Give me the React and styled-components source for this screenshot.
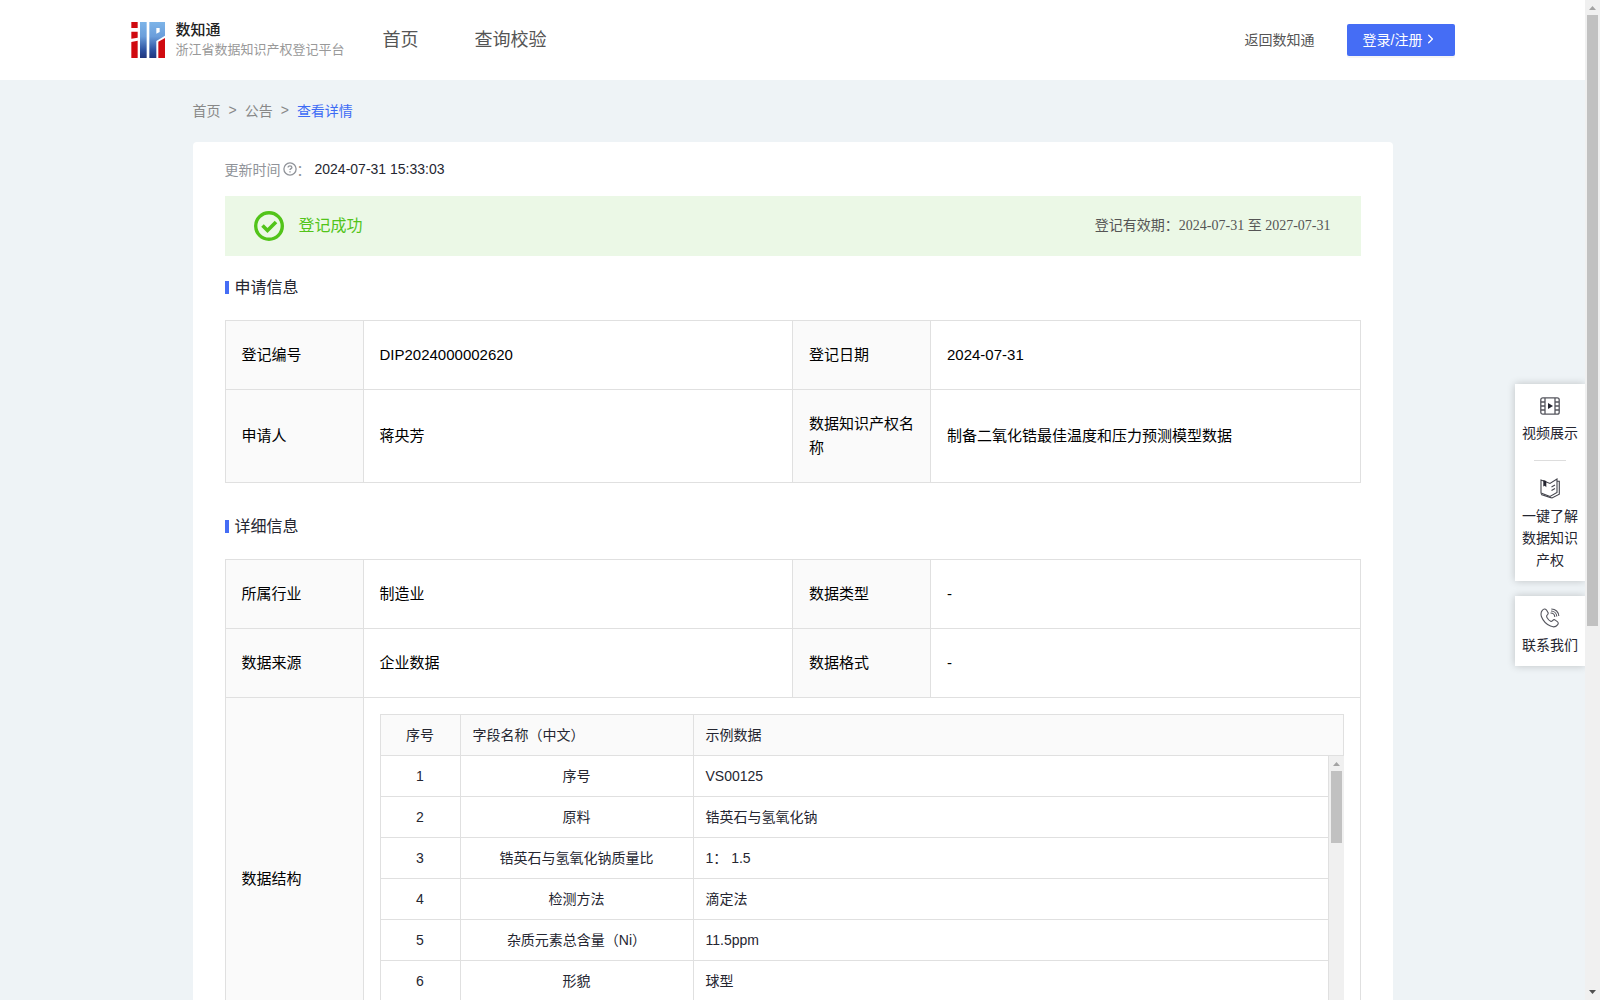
import styled, { createGlobalStyle } from 'styled-components';
import { FiChevronRight } from 'react-icons/fi';

const GlobalStyle = createGlobalStyle`
  * {
    box-sizing: border-box;
  }

  body {
    margin: 0;
    font-family: "Liberation Sans", "Noto Sans CJK SC", sans-serif;
    font-size: 14px;
    color: #252631;
    background-color: #eef3f6;
  }

  a {
    color: inherit;
    text-decoration: none;
  }
`;

const Shell = styled.div`
  position: relative;
  display: flex;
  height: 100vh;
  overflow: hidden;
`;

const Page = styled.div`
  flex: 1;
  min-width: 0;
  overflow: hidden;
`;

const HeaderWrapper = styled.header`
  height: 80px;
  background-color: #fff;
`;

const HeaderInner = styled.div`
  display: flex;
  align-items: center;
  max-width: 1324px;
  height: 100%;
  margin: 0 auto;
`;

const Brand = styled.a`
  display: flex;
  align-items: center;
  gap: 11px;
`;

const BrandText = styled.div`
  display: flex;
  flex-direction: column;
`;

const BrandName = styled.span`
  font-size: 15px;
  font-weight: 500;
  line-height: 20px;
  color: #222;
`;

const BrandSub = styled.span`
  font-size: 13px;
  line-height: 20px;
  color: #999;
`;

const Nav = styled.nav`
  display: flex;
  gap: 56px;
  margin-left: 38px;
  padding-bottom: 4px;
  font-size: 18px;
  color: #555;
`;

const HeaderActions = styled.div`
  display: flex;
  align-items: center;
  gap: 32px;
  margin-left: auto;
  color: #555;
`;

const BackLink = styled.a`
  padding-bottom: 2px;
`;

const LoginButton = styled.button`
  display: flex;
  align-items: center;
  gap: 1px;
  width: 108px;
  height: 32px;
  padding: 0 16px 2px;
  border: none;
  border-radius: 2px;
  background-color: #456df5;
  box-shadow: 0 2px 0 rgba(0, 0, 0, 0.04);
  color: #fff;
  font-family: inherit;
  font-size: 14px;
  white-space: nowrap;
  cursor: pointer;
`;

const Main = styled.main`
  max-width: 1200px;
  margin: 0 auto;
`;

const Breadcrumb = styled.nav`
  display: flex;
  align-items: center;
  gap: 8px;
  height: 62px;
  padding-bottom: 2px;
  color: #888;
`;

const Current = styled.a`
  color: #3d6bf5;
`;

const Card = styled.div`
  padding: 16px 32px;
  border-radius: 4px;
  background-color: #fff;
`;

const UpdateRow = styled.div`
  display: flex;
  align-items: center;
  height: 22px;
  margin-bottom: 16px;
  color: #909399;

  svg {
    margin-left: 2px;
  }
`;

const UpdateTime = styled.span`
  margin-left: 4px;
  color: #252631;
`;

const Banner = styled.div`
  display: flex;
  align-items: center;
  gap: 15px;
  height: 60px;
  padding: 0 30px 0 29px;
  background-color: #ebf8e6;
`;

const BannerStatus = styled.span`
  padding-bottom: 4px;
  font-size: 16px;
  color: #52c41a;
`;

const Validity = styled.span`
  margin-left: auto;
  padding-bottom: 4px;
  font-family: "Liberation Serif", "Noto Sans CJK SC", serif;
  color: #555;
`;

const SectionTitle = styled.h2`
  display: flex;
  align-items: center;
  gap: 6px;
  height: 24px;
  margin: ${({ $top }) => $top}px 0 21px;
  padding-bottom: 2px;
  font-size: 16px;
  font-weight: 400;

  &::before {
    content: '';
    width: 4px;
    height: 13px;
    margin-top: 3px;
    background-color: #456df5;
  }
`;

const InfoTable = styled.table`
  width: 100%;
  table-layout: fixed;
  border-collapse: collapse;
  font-size: 15px;
  line-height: 24px;
  color: #000;
`;

const LabelCell = styled.th`
  width: 138px;
  height: ${({ $tall }) => ($tall ? 93 : 69)}px;
  padding: 0 16px;
  border: 1px solid #e0e0e0;
  background-color: #fafafa;
  font-weight: 400;
  text-align: left;
`;

const ValueCell = styled.td`
  padding: ${({ $nested }) => ($nested ? '16px' : '0 16px')};
  border: 1px solid #e0e0e0;
`;

const FieldHead = styled.div`
  border: 1px solid #e0e0e0;
  background-color: #fafafa;
`;

const FieldBody = styled.div`
  display: flex;
  height: 287px;
  border-left: 1px solid #e0e0e0;
`;

const FieldTable = styled.table`
  flex: 1;
  width: 100%;
  table-layout: fixed;
  border-collapse: separate;
  border-spacing: 0;
  font-size: 14px;
  line-height: 20px;
  color: #252631;
  align-self: flex-start;

  th,
  td {
    height: 41px;
    padding: 0 12px 1px;
    border-right: 1px solid #e0e0e0;
    border-bottom: 1px solid #e0e0e0;
    font-weight: 400;
    text-align: left;
  }

  thead th {
    height: 40px;
    border-bottom: none;
  }

  thead th:last-child {
    border-right: none;
  }

  th:first-child,
  td:first-child {
    width: 80px;
    text-align: center;
  }

  th:nth-child(2),
  td:nth-child(2) {
    width: 233px;
  }

  td:nth-child(2) {
    text-align: center;
  }
`;

const Rail = styled.div`
  display: flex;
  flex-direction: column;
  flex: none;
  align-items: center;
  width: 15px;
  background-color: #f0f0f0;
`;

const RailArrow = styled.svg`
  flex: none;
  width: 15px;
  height: 15px;
`;

const RailTrack = styled.div`
  flex: 1;
  width: 11px;
`;

const RailThumb = styled.div`
  height: ${({ $size }) => $size}%;
  background-color: #c1c1c1;
`;

const Floating = styled.aside`
  position: absolute;
  top: 384px;
  right: 15px;
  display: flex;
  flex-direction: column;
  gap: 15px;
  width: 70px;
`;

const FloatBox = styled.div`
  display: flex;
  flex-direction: column;
  align-items: center;
  padding: 12px 7px 10px;
  background-color: #fff;
  box-shadow: 0 0 8px rgba(0, 0, 0, 0.2);
  clip-path: inset(-12px 0 -12px -12px);
`;

const FloatLink = styled.a`
  display: flex;
  flex-direction: column;
  align-items: center;
  gap: 6px;
  line-height: 22px;
  text-align: center;
`;

const FloatDivider = styled.hr`
  width: 32px;
  margin: 16px 0 17px;
  border: none;
  border-top: 1px solid #ddd;
`;

const fields = [
    ['序号', 'VS00125'],
    ['原料', '锆英石与氢氧化钠'],
    ['锆英石与氢氧化钠质量比', '1： 1.5'],
    ['检测方法', '滴定法'],
    ['杂质元素总含量（Ni）', '11.5ppm'],
    ['形貌', '球型'],
];

const Logo = () => (
    <svg width="34" height="36" viewBox="0 0 102 108" aria-hidden="true">
        <defs>
            <linearGradient id="logoBlue" gradientUnits="userSpaceOnUse" x1="0" y1="0" x2="0" y2="108">
                <stop offset="0" stopColor="#7db4e8" />
                <stop offset="0.4" stopColor="#6b9edb" />
                <stop offset="0.8" stopColor="#2b4f9e" />
                <stop offset="1" stopColor="#20357c" />
            </linearGradient>
        </defs>
        <path fill="#d00a10" d="M1 0h19v18H1zM1 29h19v18L1 50zM1 60l19-4v52H1z" />
        <path fill="url(#logoBlue)" d="M27 0h20v108H27z" />
        <path fill="url(#logoBlue)" fillRule="evenodd" d="M55 0h47v41L76 57v51H55zM76 18v17l10-5V18z" />
        <path fill="#d00a10" d="M82 59l20-11v60H82z" />
    </svg>
);

const QuestionIcon = () => (
    <svg width="14" height="14" viewBox="0 0 14 14" fill="none" stroke="#909399" strokeWidth="1.3">
        <circle cx="7" cy="7" r="6.1" />
        <path d="M5.1 5.5c0-1 .8-1.7 1.9-1.7s1.9.7 1.9 1.6c0 1.2-1.9 1.3-1.9 2.6" />
        <path d="M7 9.2v1.3" />
    </svg>
);

const SuccessIcon = () => (
    <svg width="30" height="30" viewBox="0 0 30 30" fill="none" stroke="#52c41a">
        <circle cx="15" cy="15" r="13.3" strokeWidth="3.4" />
        <path d="M8.5 14.5l5 5 8.5-8.5" strokeWidth="3.6" />
    </svg>
);

const VideoIcon = () => (
    <svg width="20" height="20" viewBox="0 0 20 20" fill="none" stroke="#55565e" strokeWidth="1.3">
        <rect x="0.8" y="1.8" width="18.4" height="16.4" rx="2" />
        <path d="M5 2v16M15 2v16M1 6h4M1 10h4M1 14h4M15 6h4M15 10h4M15 14h4" />
        <path d="M8 7l5 3-5 3z" fill="#252631" stroke="none" />
    </svg>
);

const BookIcon = () => (
    <svg width="20" height="21" viewBox="0 0 20 21" fill="none" stroke="#44454d" strokeWidth="1.1">
        <path d="M1 2l9 3.5L17 1v13.5l-7 4L1 15z" />
        <path d="M17 3.2h2.3v13L12 20l-2-.6L1 16.5" />
        <path d="M11.5 9l3.5-2M11.5 12.5l3.5-2" />
        <path d="M3.300 2l3 1v6.200L4.800 7.800l-1.500.7z" fill="#252631" stroke="none" />
    </svg>
);

const PhoneIcon = () => (
    <svg width="20" height="20" viewBox="0 0 20 20" fill="none" stroke="#55565e" strokeWidth="1.1">
        <path d="M2.3 2.4C3.8.7 5.3.7 6.3 1.8l1.500 2.300c.7 1 .4 2-.5 2.800-1 .8-.9 1.700 0 3.100.9 1.500 2 2.700 3.300 3.300 1 .4 1.500-.2 2.200-1 .8-.8 1.700-.8 2.500-.2l2 1.500c1.300 1 1.200 2.100.2 3.300-1.500 1.900-4 2.500-7 1.200C6.500 16.400 3.100 12.900 1.500 8.800.7 6.300.8 4.100 2.300 2.400z" />
        <path d="M10.500 5c2.500 0 4.200 1.800 4.300 4M11 3c3.200 0 5.600 2.300 5.800 5.500M11.300 1c4.300 0 7.300 3 7.500 7" />
    </svg>
);

const Scrollbar = ({ size }) => (
    <Rail aria-hidden="true">
        <RailArrow viewBox="0 0 15 15">
            <path d="M4 10l3.500-4 3.500 4z" fill="#a3a3a3" />
        </RailArrow>
        <RailTrack>
            <RailThumb $size={size} />
        </RailTrack>
        <RailArrow viewBox="0 0 15 15">
            <path d="M4 5l3.500 4L11 5z" fill="#505050" />
        </RailArrow>
    </Rail>
);

const Header = () => (
    <HeaderWrapper>
        <HeaderInner>
            <Brand href="#">
                <Logo />
                <BrandText>
                    <BrandName>数知通</BrandName>
                    <BrandSub>浙江省数据知识产权登记平台</BrandSub>
                </BrandText>
            </Brand>
            <Nav>
                <a href="#">首页</a>
                <a href="#">查询校验</a>
            </Nav>
            <HeaderActions>
                <BackLink href="#">返回数知通</BackLink>
                <LoginButton type="button">
                    登录/注册
                    <FiChevronRight size={16} />
                </LoginButton>
            </HeaderActions>
        </HeaderInner>
    </HeaderWrapper>
);

const FieldStructure = () => (
    <>
        <FieldHead>
            <FieldTable>
                <thead>
                    <tr>
                        <th>序号</th>
                        <th>字段名称（中文）</th>
                        <th>示例数据</th>
                    </tr>
                </thead>
            </FieldTable>
        </FieldHead>
        <FieldBody>
            <FieldTable>
                <tbody>
                    {fields.map(([name, sample], index) => (
                        <tr key={name}>
                            <td>{index + 1}</td>
                            <td>{name}</td>
                            <td>{sample}</td>
                        </tr>
                    ))}
                </tbody>
            </FieldTable>
            <Scrollbar size={28} />
        </FieldBody>
    </>
);

const SideTools = () => (
    <Floating>
        <FloatBox>
            <FloatLink href="#">
                <VideoIcon />
                视频展示
            </FloatLink>
            <FloatDivider />
            <FloatLink href="#">
                <BookIcon />
                一键了解数据知识产权
            </FloatLink>
        </FloatBox>
        <FloatBox>
            <FloatLink href="#">
                <PhoneIcon />
                联系我们
            </FloatLink>
        </FloatBox>
    </Floating>
);

const App = () => {
    return (
        <Shell>
            <GlobalStyle />
            <Page>
                <Header />
                <Main>
                    <Breadcrumb>
                        <a href="#">首页</a>
                        <span>&gt;</span>
                        <a href="#">公告</a>
                        <span>&gt;</span>
                        <Current href="#">查看详情</Current>
                    </Breadcrumb>

                    <Card>
                        <UpdateRow>
                            更新时间
                            <QuestionIcon />
                            ：
                            <UpdateTime>2024-07-31 15:33:03</UpdateTime>
                        </UpdateRow>

                        <Banner>
                            <SuccessIcon />
                            <BannerStatus>登记成功</BannerStatus>
                            <Validity>登记有效期：2024-07-31 至 2027-07-31</Validity>
                        </Banner>

                        <SectionTitle $top={19}>申请信息</SectionTitle>
                        <InfoTable>
                            <tbody>
                                <tr>
                                    <LabelCell scope="row">登记编号</LabelCell>
                                    <ValueCell>DIP2024000002620</ValueCell>
                                    <LabelCell scope="row">登记日期</LabelCell>
                                    <ValueCell>2024-07-31</ValueCell>
                                </tr>
                                <tr>
                                    <LabelCell $tall scope="row">申请人</LabelCell>
                                    <ValueCell>蒋央芳</ValueCell>
                                    <LabelCell $tall scope="row">数据知识产权名称</LabelCell>
                                    <ValueCell>制备二氧化锆最佳温度和压力预测模型数据</ValueCell>
                                </tr>
                            </tbody>
                        </InfoTable>

                        <SectionTitle $top={31}>详细信息</SectionTitle>
                        <InfoTable>
                            <tbody>
                                <tr>
                                    <LabelCell scope="row">所属行业</LabelCell>
                                    <ValueCell>制造业</ValueCell>
                                    <LabelCell scope="row">数据类型</LabelCell>
                                    <ValueCell>-</ValueCell>
                                </tr>
                                <tr>
                                    <LabelCell scope="row">数据来源</LabelCell>
                                    <ValueCell>企业数据</ValueCell>
                                    <LabelCell scope="row">数据格式</LabelCell>
                                    <ValueCell>-</ValueCell>
                                </tr>
                                <tr>
                                    <LabelCell scope="row">数据结构</LabelCell>
                                    <ValueCell $nested colSpan={3}>
                                        <FieldStructure />
                                    </ValueCell>
                                </tr>
                            </tbody>
                        </InfoTable>
                    </Card>
                </Main>
            </Page>
            <SideTools />
            <Scrollbar size={63} />
        </Shell>
    );
};

export default App;
